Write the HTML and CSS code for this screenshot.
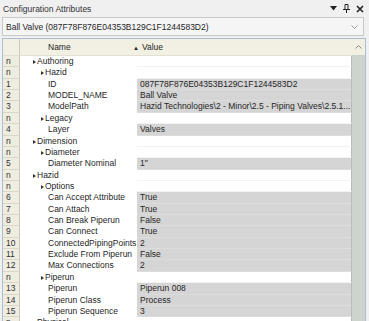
FILE: index.html
```html
<!DOCTYPE html>
<html>
  <head>
    <link rel="stylesheet" href="styles.css">
  </head>
  <body>
    <div class="panel">
      <div class="titlebar">
        <span class="title">Configuration Attributes</span>
        <div class="tools">
          <svg width="7" height="5" viewBox="0 0 7 5"><path d="M0 0h7L3.5 4.5z" fill="#222"/></svg>
          <svg width="7" height="9" viewBox="0 0 7 9"><path d="M2 0.5h3v5H2z" fill="none" stroke="#222"/><path d="M0 5.5h7M3.5 5.5V9" stroke="#222"/></svg>
          <svg width="8" height="8" viewBox="0 0 8 8"><path d="M1 1l6 6M7 1L1 7" stroke="#222" stroke-width="1.6"/></svg>
        </div>
      </div>

      <div class="combo">
        <span>Ball Valve (087F78F876E04353B129C1F1244583D2)</span>
        <svg width="7" height="4" viewBox="0 0 7 4"><path d="M0.5 0.5l3 3 3-3" fill="none" stroke="#9a9a9a"/></svg>
      </div>

      <div class="grid">
        <div class="grid-body">
          <div class="row header">
            <div class="rh"></div>
            <div class="name">Name</div>
            <div class="value"><span class="sort">&#9650;</span>Value</div>
          </div>

          <div class="row group"><div class="rh">n</div><div class="name l1"><i class="arrow"></i>Authoring</div><div class="value"></div></div>
          <div class="row group"><div class="rh">n</div><div class="name l2"><i class="arrow"></i>Hazid</div><div class="value"></div></div>
          <div class="row"><div class="rh">1</div><div class="name">ID</div><div class="value">087F78F876E04353B129C1F1244583D2</div></div>
          <div class="row"><div class="rh">2</div><div class="name">MODEL_NAME</div><div class="value">Ball Valve</div></div>
          <div class="row"><div class="rh">3</div><div class="name">ModelPath</div><div class="value">Hazid Technologies\2 - Minor\2.5 - Piping Valves\2.5.1...</div></div>
          <div class="row group"><div class="rh">n</div><div class="name l2"><i class="arrow"></i>Legacy</div><div class="value"></div></div>
          <div class="row"><div class="rh">4</div><div class="name">Layer</div><div class="value">Valves</div></div>
          <div class="row group"><div class="rh">n</div><div class="name l1"><i class="arrow"></i>Dimension</div><div class="value"></div></div>
          <div class="row group"><div class="rh">n</div><div class="name l2"><i class="arrow"></i>Diameter</div><div class="value"></div></div>
          <div class="row"><div class="rh">5</div><div class="name">Diameter Nominal</div><div class="value">1"</div></div>
          <div class="row group"><div class="rh">n</div><div class="name l1"><i class="arrow"></i>Hazid</div><div class="value"></div></div>
          <div class="row group"><div class="rh">n</div><div class="name l2"><i class="arrow"></i>Options</div><div class="value"></div></div>
          <div class="row"><div class="rh">6</div><div class="name">Can Accept Attribute</div><div class="value">True</div></div>
          <div class="row"><div class="rh">7</div><div class="name">Can Attach</div><div class="value">True</div></div>
          <div class="row"><div class="rh">8</div><div class="name">Can Break Piperun</div><div class="value">False</div></div>
          <div class="row"><div class="rh">9</div><div class="name">Can Connect</div><div class="value">True</div></div>
          <div class="row"><div class="rh">10</div><div class="name">ConnectedPipingPoints</div><div class="value">2</div></div>
          <div class="row"><div class="rh">11</div><div class="name">Exclude From Piperun</div><div class="value">False</div></div>
          <div class="row"><div class="rh">12</div><div class="name">Max Connections</div><div class="value">2</div></div>
          <div class="row group"><div class="rh">n</div><div class="name l2"><i class="arrow"></i>Piperun</div><div class="value"></div></div>
          <div class="row"><div class="rh">13</div><div class="name">Piperun</div><div class="value">Piperun 008</div></div>
          <div class="row"><div class="rh">14</div><div class="name">Piperun Class</div><div class="value">Process</div></div>
          <div class="row"><div class="rh">15</div><div class="name">Piperun Sequence</div><div class="value">3</div></div>
          <div class="row group"><div class="rh">n</div><div class="name l1"><i class="arrow"></i>Physical</div><div class="value"></div></div>
        </div>

        <div class="vscroll">
          <div class="up">
            <svg width="7" height="4" viewBox="0 0 7 4"><path d="M0.5 3.5l3-3 3 3" fill="none" stroke="#8a8a8a"/></svg>
          </div>
          <div class="track"></div>
        </div>
      </div>
    </div>
  </body>
</html>
```

FILE: styles.css
```css
body {
  margin: 0;
  background-color: #f0f0f0;
  font-family: "Liberation Sans", Arial, sans-serif;
  font-size: 8.5px;
  color: #262626;
  overflow: hidden;
}
.panel {
  width: 369px;
  height: 321px;
  display: flex;
  flex-direction: column;
}
.titlebar {
  height: 17px;
  display: flex;
  align-items: center;
  justify-content: space-between;
  padding: 0 5px 0 3px;
  color: #333;
}
.tools {
  display: flex;
  align-items: center;
  gap: 6px;
}
.combo {
  margin: 0 5px 0 2px;
  height: 17px;
  border: 1px solid #c8c8c8;
  background-color: #f5f5f5;
  display: flex;
  align-items: center;
  justify-content: space-between;
  padding: 0 5px 0 3px;
}
.grid {
  margin: 2px 3px 0 2px;
  flex: 1;
  display: flex;
  border: 1px solid #a9bfd4;
  border-bottom: none;
  background-color: #fff;
  overflow: hidden;
}
.grid-body {
  flex: 1;
  display: flex;
  flex-direction: column;
}
.row {
  display: grid;
  grid-template-columns: 17px 117px 1fr;
  height: 11.36px;
  line-height: 11.36px;
  flex-shrink: 0;
}
.row > div {
  overflow: hidden;
  white-space: nowrap;
}
.rh {
  background-color: #eeeddf;
  border-right: 1px solid #c9c8b9;
  border-bottom: 1px solid #d8d7c9;
  padding-left: 3px;
  color: #333;
}
.name {
  padding-left: 28px;
}
.name.l1 {
  padding-left: 13px;
}
.name.l2 {
  padding-left: 21px;
}
.arrow {
  display: inline-block;
  width: 0;
  height: 0;
  border-left: 3px solid #333;
  border-top: 2.5px solid transparent;
  border-bottom: 2.5px solid transparent;
  margin-right: 1px;
  vertical-align: 0;
}
.value {
  background-color: #d5d5d5;
  border-bottom: 1px solid #dcdcdc;
  border-right: 1px solid #b9b9b9;
  padding-left: 3px;
}
.group .value {
  background-color: #fff;
  border-bottom-color: #f2f2f2;
}
.header {
  height: 16px;
  line-height: 16px;
  background-color: #f2f0e2;
  border-bottom: 1px solid #e2e0d2;
}
.header .rh {
  border-bottom: none;
  background-color: transparent;
}
.header .name {
  padding-left: 28px;
}
.header .value {
  background-color: transparent;
  border: none;
  margin-left: -4px;
  padding-left: 0;
}
.sort {
  font-size: 6px;
  margin-right: 3px;
}
.vscroll {
  width: 13px;
  display: flex;
  flex-direction: column;
}
.up {
  height: 16px;
  background-color: #f2f0e2;
  display: flex;
  align-items: center;
  justify-content: center;
}
.track {
  flex: 1;
  background-color: #cdd3cd;
}
```
